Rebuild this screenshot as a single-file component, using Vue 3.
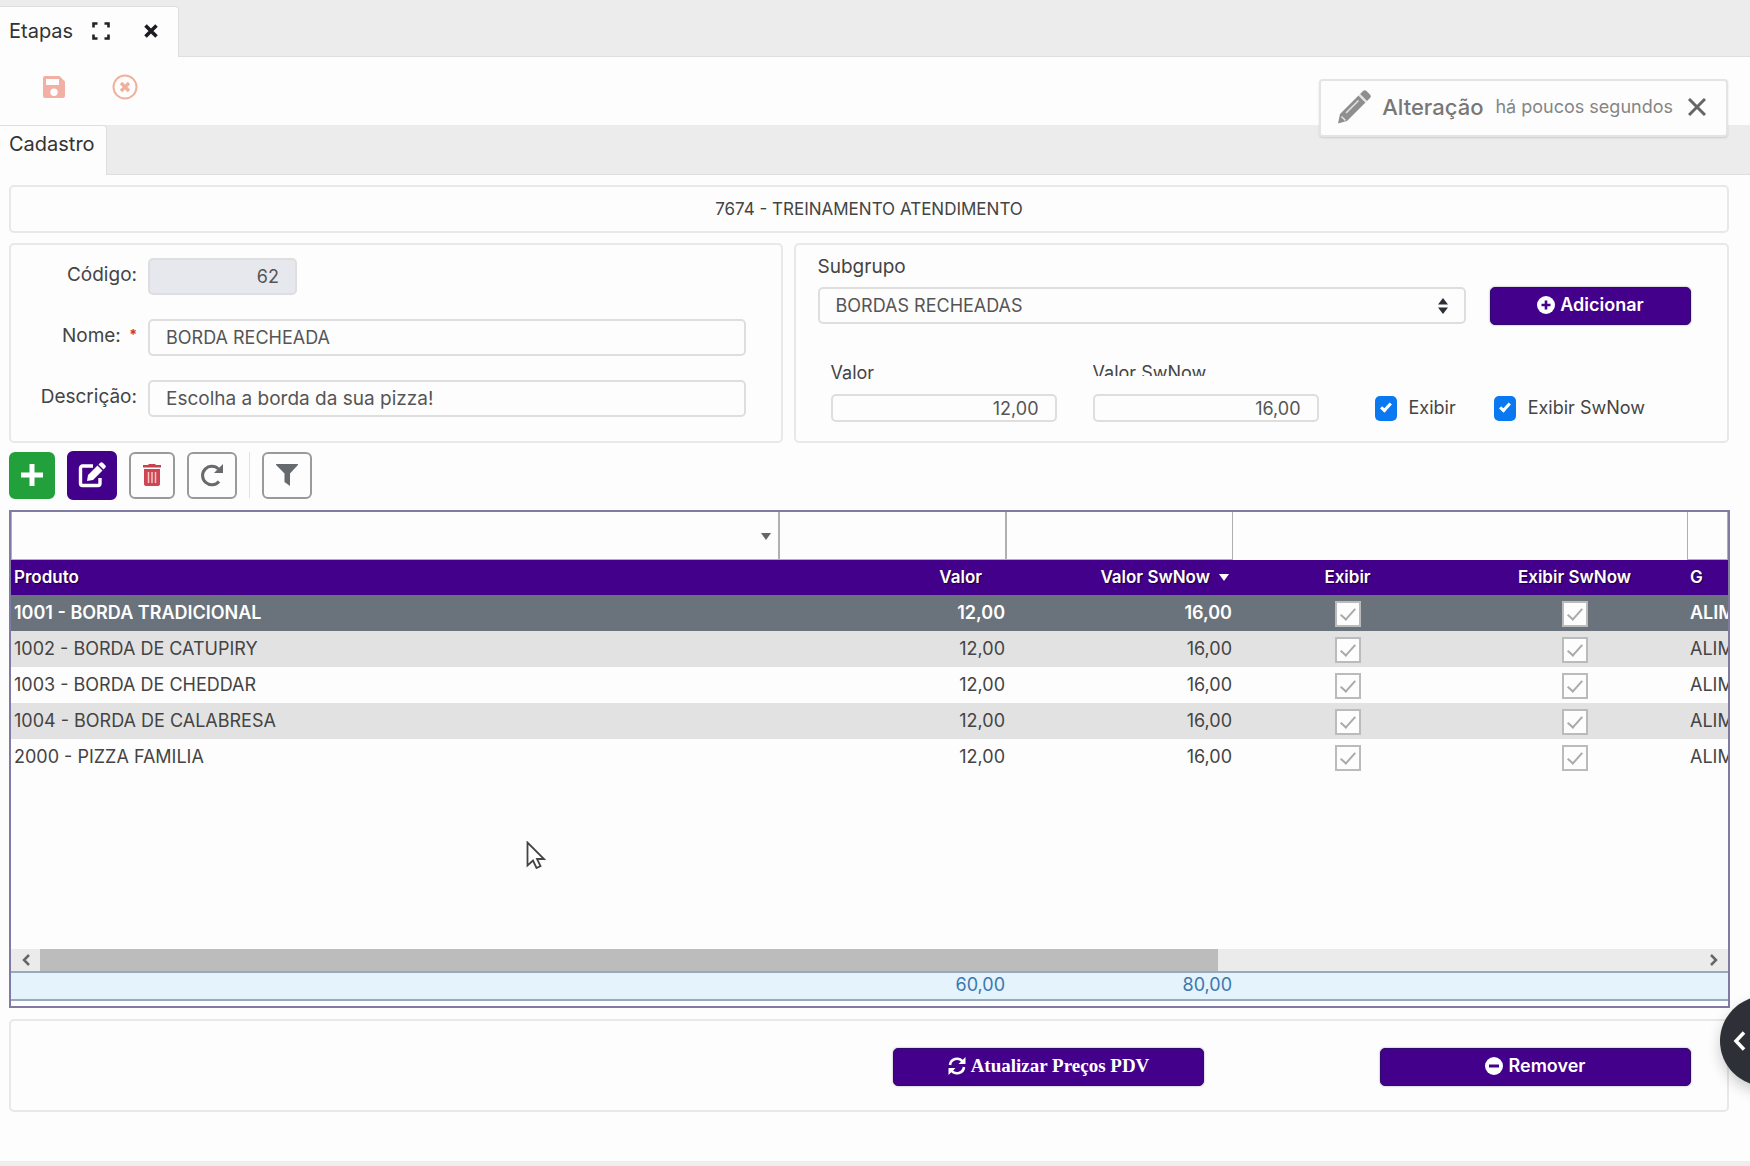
<script setup>
import { ref } from 'vue'

const nome = ref('BORDA RECHEADA')
const descricao = ref('Escolha a borda da sua pizza!')
const valor = ref('12,00')
const valorSwNow = ref('16,00')
const exibir = ref(true)
const exibirSwNow = ref(true)
const selected = ref(1001)

const rows = [
  { id: 1001, nome: 'BORDA TRADICIONAL' },
  { id: 1002, nome: 'BORDA DE CATUPIRY' },
  { id: 1003, nome: 'BORDA DE CHEDDAR' },
  { id: 1004, nome: 'BORDA DE CALABRESA' },
  { id: 2000, nome: 'PIZZA FAMILIA' }
].map((r) => ({ ...r, valor: '12,00', swnow: '16,00', grupo: 'ALIM' }))
</script>

<template>
  <div class="page">
    <nav class="strip window-tabs">
      <div class="tab">
        <span>Etapas</span>
        <button class="plain" aria-label="Tela cheia">
          <svg width="18" height="18" viewBox="0 0 18 18" fill="none" stroke="#222" stroke-width="2.600">
            <path d="M1.500 5.500V1.500H5.500M12.500 1.500h4V5.500M16.500 12.500v4H12.500M5.500 16.500H1.500V12.500" />
          </svg>
        </button>
        <button class="plain" aria-label="Fechar aba">
          <svg width="14" height="14" viewBox="0 0 14 14" stroke="#1c1c22" stroke-width="3.600">
            <path d="M1.500 1.500l11 11M12.500 1.500l-11 11" />
          </svg>
        </button>
      </div>
    </nav>

    <div class="actions">
      <button class="plain" aria-label="Salvar">
        <svg width="24" height="24" viewBox="0 0 24 24">
          <path fill="#f2b0a4" fill-rule="evenodd" d="M3 1h14.500L23 6.500V21a2 2 0 0 1-2 2H3a2 2 0 0 1-2-2V3a2 2 0 0 1 2-2zM4 4v6h13V4zM12 13.500a3.700 3.700 0 1 0 0 7.400 3.700 3.700 0 0 0 0-7.400z" />
        </svg>
      </button>
      <button class="plain" aria-label="Cancelar">
        <svg width="26" height="26" viewBox="0 0 26 26" fill="none" stroke="#f0b19c">
          <circle cx="13" cy="13" r="11.500" stroke-width="2" />
          <path stroke-width="3.400" d="M9 9l8 8M17 9l-8 8" />
        </svg>
      </button>
    </div>

    <nav class="strip form-tabs">
      <div class="tab">Cadastro</div>
    </nav>

    <main>
      <h1 class="panel title">7674 - TREINAMENTO ATENDIMENTO</h1>

      <div class="columns">
        <form class="panel identity" @submit.prevent>
          <label for="codigo">Código:</label>
          <input id="codigo" class="field code" value="62" disabled />
          <label for="nome">Nome: <b class="req">*</b></label>
          <input id="nome" v-model="nome" class="field" />
          <label for="descricao">Descrição:</label>
          <input id="descricao" v-model="descricao" class="field wide-text" />
        </form>

        <form class="panel prices" @submit.prevent>
          <label class="sub" for="subgrupo">Subgrupo</label>
          <div class="line">
            <div class="select">
              <select id="subgrupo" class="field">
                <option>BORDAS RECHEADAS</option>
              </select>
              <svg width="10" height="18" viewBox="0 0 10 18" fill="#2b2f36">
                <path d="M0 7.500L5 1l5 6.500zM0 10.500L5 17l5-6.500z" />
              </svg>
            </div>
            <button class="primary add">
              <svg width="18" height="18" viewBox="0 0 18 18">
                <circle cx="9" cy="9" r="9" fill="#fff" />
                <path d="M9 4.500v9M4.500 9h9" stroke="#43008a" stroke-width="2.600" />
              </svg>
              Adicionar
            </button>
          </div>
          <div class="line values">
            <div class="value">
              <label for="valor">Valor</label>
              <input id="valor" v-model="valor" class="field" />
            </div>
            <div class="value">
              <label for="swnow" class="cut">Valor SwNow</label>
              <input id="swnow" v-model="valorSwNow" class="field" />
            </div>
            <label class="check"><input v-model="exibir" type="checkbox" />Exibir</label>
            <label class="check"><input v-model="exibirSwNow" type="checkbox" />Exibir SwNow</label>
          </div>
        </form>
      </div>

      <div class="tools">
        <button class="tool new" aria-label="Novo">
          <svg width="22" height="22" viewBox="0 0 22 22"><path d="M11 0v22M0 11h22" stroke="#fff" stroke-width="5" /></svg>
        </button>
        <button class="tool edit" aria-label="Editar">
          <svg width="28" height="26" viewBox="0 0 28 26" fill="none">
            <path d="M15 4H4.500a2 2 0 0 0-2 2v15.500a2 2 0 0 0 2 2H20a2 2 0 0 0 2-2V16" stroke="#fff" stroke-width="3.400" />
            <path d="M9 19l1-6L19.500 3.500l5 5L15 18zM20.500 2.500L22 1a2 2 0 0 1 3 0l2 2a2 2 0 0 1 0 3l-1.500 1.500z" fill="#fff" />
          </svg>
        </button>
        <button class="tool trash" aria-label="Excluir">
          <svg width="20" height="24" viewBox="0 0 20 24">
            <path d="M1 2h5l1-1h6l1 1h5v2.500H1z" fill="#c8414f" />
            <path d="M2 6h16v15a2 2 0 0 1-2 2H4a2 2 0 0 1-2-2z" fill="#cf4553" />
            <path d="M6.500 9v11M10 9v11M13.500 9v11" stroke="#f5c9c4" stroke-width="1.500" />
          </svg>
        </button>
        <button class="tool" aria-label="Atualizar">
          <svg width="24" height="24" viewBox="0 0 24 24" fill="none">
            <path d="M19 18.500A9.300 9.300 0 1 1 18.500 6" stroke="#6a6a6e" stroke-width="3" />
            <path d="M23 1v9h-9z" fill="#6a6a6e" />
          </svg>
        </button>
        <span class="divider"></span>
        <button class="tool" aria-label="Filtrar">
          <svg width="22" height="22" viewBox="0 0 22 22" fill="#66696d"><path d="M.5 0h21a.6.6 0 0 1 .4 1L14 9.500V22l-5.500-4V9.500L.1 1A.6.600 0 0 1 .5 0z" /></svg>
        </button>
      </div>

      <section class="grid">
        <div class="grid-body">
          <table>
            <colgroup>
              <col /><col class="c-num" /><col class="c-num" /><col class="c-num" /><col class="c-num" /><col class="c-last" />
            </colgroup>
            <thead>
              <tr class="filters">
                <td>
                  <div class="combo">
                    <input aria-label="Filtrar produto" />
                    <svg width="10" height="7" viewBox="0 0 10 7"><path d="M0 0h10L5 7z" fill="#666" /></svg>
                  </div>
                </td>
                <td><input aria-label="Filtrar valor" /></td>
                <td><input aria-label="Filtrar valor SwNow" /></td>
                <td></td>
                <td></td>
                <td><input aria-label="Filtrar grupo" /></td>
              </tr>
              <tr class="heads">
                <th>Produto</th>
                <th class="num pad">Valor</th>
                <th class="num">Valor SwNow<svg width="10" height="7" viewBox="0 0 10 7"><path d="M0 0h10L5 7z" fill="#fff" /></svg></th>
                <th class="mid">Exibir</th>
                <th class="mid">Exibir SwNow</th>
                <th>G</th>
              </tr>
            </thead>
            <tbody>
              <tr v-for="r in rows" :key="r.id" :class="{ selected: r.id === selected }" @click="selected = r.id">
                <td>{{ r.id }} - {{ r.nome }}</td>
                <td class="num">{{ r.valor }}</td>
                <td class="num">{{ r.swnow }}</td>
                <td class="mid"><input type="checkbox" checked disabled aria-label="Exibir" /></td>
                <td class="mid"><input type="checkbox" checked disabled aria-label="Exibir SwNow" /></td>
                <td>{{ r.grupo }}</td>
              </tr>
            </tbody>
          </table>
        </div>
        <div class="scroll">
          <button class="plain" aria-label="Rolar para a esquerda">
            <svg width="8" height="12" viewBox="0 0 8 12" fill="none" stroke="#666" stroke-width="2.500"><path d="M7 1L2 6l5 5" /></svg>
          </button>
          <div class="track"><div class="thumb"></div></div>
          <button class="plain" aria-label="Rolar para a direita">
            <svg width="8" height="12" viewBox="0 0 8 12" fill="none" stroke="#666" stroke-width="2.500"><path d="M1 1l5 5-5 5" /></svg>
          </button>
        </div>
        <table class="totals">
          <colgroup>
            <col /><col class="c-num" /><col class="c-num" /><col class="c-num" /><col class="c-num" /><col class="c-last" />
          </colgroup>
          <tbody>
            <tr><td></td><td class="num">60,00</td><td class="num">80,00</td><td></td><td></td><td></td></tr>
          </tbody>
        </table>
      </section>

      <footer class="panel bottom">
        <button class="primary serif">
          <svg width="18" height="18" viewBox="0 0 18 18" fill="none" stroke="#fff" stroke-width="2.600">
            <path d="M2 8A7 7 0 0 1 14.500 4.500M16 10A7 7 0 0 1 3.500 13.500" />
            <path d="M17.500 0v7h-7zM.5 18v-7h7z" fill="#fff" stroke="none" />
          </svg>
          Atualizar Preços PDV
        </button>
        <button class="primary">
          <svg width="18" height="18" viewBox="0 0 18 18">
            <circle cx="9" cy="9" r="9" fill="#fff" />
            <path d="M4 9h10" stroke="#43008a" stroke-width="3" />
          </svg>
          Remover
        </button>
      </footer>
    </main>

    <div class="status"></div>

    <aside class="toast">
      <svg width="34" height="34" viewBox="0 0 34 34">
        <path fill="#8f8f8f" d="M23 4l3-3a2.500 2.500 0 0 1 3.500 0l3.500 3.500a2.500 2.500 0 0 1 0 3.500l-3 3zM21.500 5.500l7 7L10 31 1 33.500 3 24z" />
        <path d="M9 23L21.500 10.500M4.500 26.500l4 4M22 4.500l7.500 7.500" stroke="#e4e4e4" stroke-width="1.500" />
      </svg>
      <strong>Alteração</strong>
      <span>há poucos segundos</span>
      <button class="plain" aria-label="Fechar aviso">
        <svg width="18" height="18" viewBox="0 0 18 18" stroke="#666" stroke-width="3"><path d="M1 1l16 16M17 1L1 17" /></svg>
      </button>
    </aside>

    <button class="drawer" aria-label="Abrir painel">
      <svg width="13" height="20" viewBox="0 0 13 20" fill="none" stroke="#fff" stroke-width="3.500"><path d="M11 1.500L3 10l8 8.500" /></svg>
    </button>

    <svg class="pointer" width="20" height="28" viewBox="0 0 20 28">
      <path d="M1.500 1.500v23l5.500-5 3.500 7.500 4-2-3.500-7H18z" fill="#fff" stroke="#444" stroke-width="1.800" />
    </svg>
  </div>
</template>

<style>
body {
  margin: 0;
  background: #fdfdfd;
}
</style>

<style scoped>
.page {
  position: relative;
  overflow: hidden;
  min-height: 100vh;
  display: flex;
  flex-direction: column;
  font-family: Inter, "Open Sans", sans-serif;
  font-size: 18px;
  line-height: 24px;
  color: #444;
}
.page *,
.page *::before,
.page *::after {
  box-sizing: border-box;
}
svg {
  display: block;
  flex: none;
}
button,
input,
select {
  font: inherit;
  color: inherit;
  margin: 0;
}
.plain {
  display: flex;
  padding: 0;
  border: 0;
  background: none;
}
.strip {
  display: flex;
  background: #ececec;
  border-bottom: 1px solid #dedede;
}
.tab {
  display: flex;
  align-items: center;
  background: #fdfdfd;
  border: 1px solid #dedede;
  border-width: 1px 1px 0 0;
  border-radius: 0 4px 0 0;
  margin-bottom: -1px;
  font-size: 20px;
  color: #333;
}
.window-tabs {
  height: 57px;
  padding-top: 6px;
}
.window-tabs .tab {
  width: 179px;
  padding: 0 20px 2px 9px;
}
.window-tabs .tab span {
  flex: 1;
}
.window-tabs .tab .plain + .plain {
  margin-left: 34px;
}
.actions {
  height: 68px;
  display: flex;
  align-items: center;
  gap: 46px;
  padding: 0 0 8px 42px;
}
.form-tabs {
  height: 50px;
}
.form-tabs .tab {
  padding: 0 11px 14px 9px;
}
main {
  display: flex;
  flex-direction: column;
  padding: 10px 21px 0 9px;
}
.panel {
  border: 2px solid #e8e8e8;
  border-radius: 5px;
}
.title {
  margin: 0 0 10px;
  height: 48px;
  display: flex;
  align-items: center;
  justify-content: center;
  font-size: 17px;
  font-weight: 400;
}
.columns {
  display: grid;
  grid-template-columns: 774fr 936fr;
  gap: 11px;
  height: 200px;
}
.field {
  width: 100%;
  height: 37px;
  padding: 0 16px;
  border: 2px solid #dedede;
  border-radius: 5px;
  background: #fdfdfd;
  color: #555;
}
.identity {
  display: grid;
  grid-template-columns: 126px 1fr;
  grid-auto-rows: 37px;
  align-items: center;
  row-gap: 24px;
  column-gap: 11px;
  padding: 13px 35px 0 0;
}
.identity label {
  text-align: right;
  padding-bottom: 4px;
  font-size: 19px;
}
.req {
  color: #c33;
  margin-left: 3px;
  font-size: 14px;
  vertical-align: 2px;
}
.wide-text {
  font-size: 19px;
}
.code {
  width: 149px;
  text-align: right;
  background: #e7e8ed;
}
.prices {
  padding: 10px 36px 0 22px;
  display: flex;
  flex-direction: column;
}
.sub {
  font-size: 19px;
}
.line {
  display: flex;
}
.select {
  position: relative;
  flex: 1;
  margin-right: 24px;
}
.select select {
  appearance: none;
}
.select svg {
  position: absolute;
  right: 18px;
  top: 10px;
  pointer-events: none;
}
.prices > .line:nth-of-type(1) {
  padding-top: 8px;
}
.primary {
  display: flex;
  align-items: center;
  justify-content: center;
  gap: 5px;
  height: 38px;
  padding: 0 0 2px;
  border: 1px solid #2f0a6e;
  border-radius: 5px;
  background: #43008a;
  color: #fff;
  font-weight: 600;
  box-shadow: 0 0 2px #55555599;
}
.add {
  width: 201px;
}
.values {
  padding: 36px 0 0 13px;
  align-items: flex-end;
}
.value {
  width: 226px;
  margin-right: 36px;
}
.value label {
  display: block;
  height: 24px;
  margin-bottom: 9px;
}
.value .cut {
  height: 15px;
  margin-bottom: 18px;
  overflow: hidden;
}
.value .field {
  display: block;
  height: 28px;
  text-align: right;
}
.check {
  display: flex;
  align-items: center;
  height: 28px;
  gap: 12px;
  margin-left: 20px;
  margin-right: 18px;
  white-space: nowrap;
}
.check input {
  appearance: none;
  width: 22px;
  height: 25px;
  border-radius: 5px;
  background: #0a78f0;
  display: grid;
  place-items: center;
}
input[type="checkbox"]:checked::after {
  content: "";
  width: 6px;
  height: 11px;
  border: solid #fff;
  border-width: 0 3px 3px 0;
  transform: rotate(42deg);
  margin-bottom: 3px;
}
.tools {
  display: flex;
  align-items: center;
  gap: 12px;
  height: 50px;
  margin: 7px 0 10px;
}
.tool {
  display: flex;
  align-items: center;
  justify-content: center;
  width: 50px;
  height: 47px;
  padding: 0;
  border: 2px solid #9a9a9a;
  border-radius: 6px;
  background: #fdfdfd;
}
.tool.new {
  width: 46px;
  background: #21a03c;
  border-color: #21a03c;
}
.tool.trash {
  width: 46px;
}
.tool.edit {
  height: 49px;
  background: #43008a;
  border-color: #43008a;
}
.divider {
  width: 1px;
  height: 46px;
  background: #e2e2e2;
}
.grid {
  border: 2px solid #807ba3;
  padding-bottom: 5px;
  margin-right: -1px;
}
.grid-body {
  height: 437px;
  overflow: hidden;
}
table {
  width: 100%;
  table-layout: fixed;
  border-collapse: collapse;
}
.c-num {
  width: 227px;
}
.c-last {
  width: 41px;
}
td,
th {
  height: 36px;
  padding: 0 1px 1px 3px;
  text-align: left;
  white-space: nowrap;
  overflow: hidden;
  font-weight: 400;
}
th:last-child,
td:last-child {
  padding-right: 0;
}
.num {
  text-align: right;
}
.mid {
  text-align: center;
}
.filters td {
  height: 48px;
  padding: 0;
}
.filters input {
  display: block;
  width: 100%;
  height: 48px;
  border: solid #b0b0b0;
  border-width: 0 1px 1px;
  background: #fdfdfd;
}
.combo {
  position: relative;
}
.combo svg {
  position: absolute;
  right: 8px;
  top: 21px;
}
.heads {
  background: #43008a;
}
.heads th {
  height: 35px;
  color: #fff;
  font-size: 17px;
  font-weight: 600;
  text-shadow: 1px 1px 1px #1a0040;
}
.heads th svg {
  display: inline-block;
  margin: 0 3px 2px 9px;
}
.heads .pad {
  padding-right: 24px;
}
tbody tr:nth-child(even) {
  background: #e2e2e2;
}
tbody tr.selected {
  background: #6a737b;
  color: #fff;
}
.selected td {
  font-weight: 600;
}
.mid input {
  appearance: none;
  display: inline-grid;
  place-items: center;
  width: 26px;
  height: 26px;
  border: 2px solid #bbb;
  background: #fdfdfd;
  vertical-align: middle;
  margin-top: 2px;
}
.mid input[type="checkbox"]:checked::after {
  width: 8px;
  height: 15px;
  border-color: #aaa;
  border-width: 0 2px 2px 0;
}
.scroll {
  display: flex;
  height: 22px;
  background: #ebebeb;
}
.scroll button {
  width: 29px;
  align-items: center;
  justify-content: center;
}
.track {
  flex: 1;
}
.thumb {
  width: 71%;
  height: 22px;
  background: #bcbcbc;
}
.totals {
  background: #e4f3fc;
  border: solid #97aabd;
  border-width: 2px 0;
}
.totals td {
  height: 28px;
  padding-bottom: 2px;
  color: #3b78ae;
}
.bottom {
  display: flex;
  justify-content: flex-end;
  align-items: center;
  gap: 176px;
  height: 93px;
  margin-top: 11px;
  padding: 2px 36px 0 0;
}
.bottom .primary {
  width: 311px;
}
.serif {
  font-family: "Liberation Serif", serif;
  font-size: 19px;
  font-weight: 700;
}
.status {
  height: 5px;
  margin-top: auto;
  background: #eee;
}
.toast {
  position: absolute;
  top: 79px;
  right: 22px;
  display: flex;
  align-items: center;
  height: 58px;
  padding: 0 20px 2px 16px;
  border: 2px solid #e4e4e4;
  border-radius: 4px;
  background: #fdfdfd;
  box-shadow: 0 1px 2px #00000022;
  color: #858585;
}
.toast strong {
  margin: 0 12px 0 11px;
  font-size: 22px;
  font-weight: 500;
  color: #777;
}
.toast button {
  margin-left: 15px;
}
.drawer {
  position: absolute;
  top: 996px;
  right: -60px;
  width: 90px;
  height: 90px;
  padding: 0 0 0 13px;
  border: 0;
  border-radius: 50%;
  background: #2d3036;
  box-shadow: 0 6px 14px #00000033;
}
.pointer {
  position: absolute;
  left: 526px;
  top: 841px;
}
</style>
